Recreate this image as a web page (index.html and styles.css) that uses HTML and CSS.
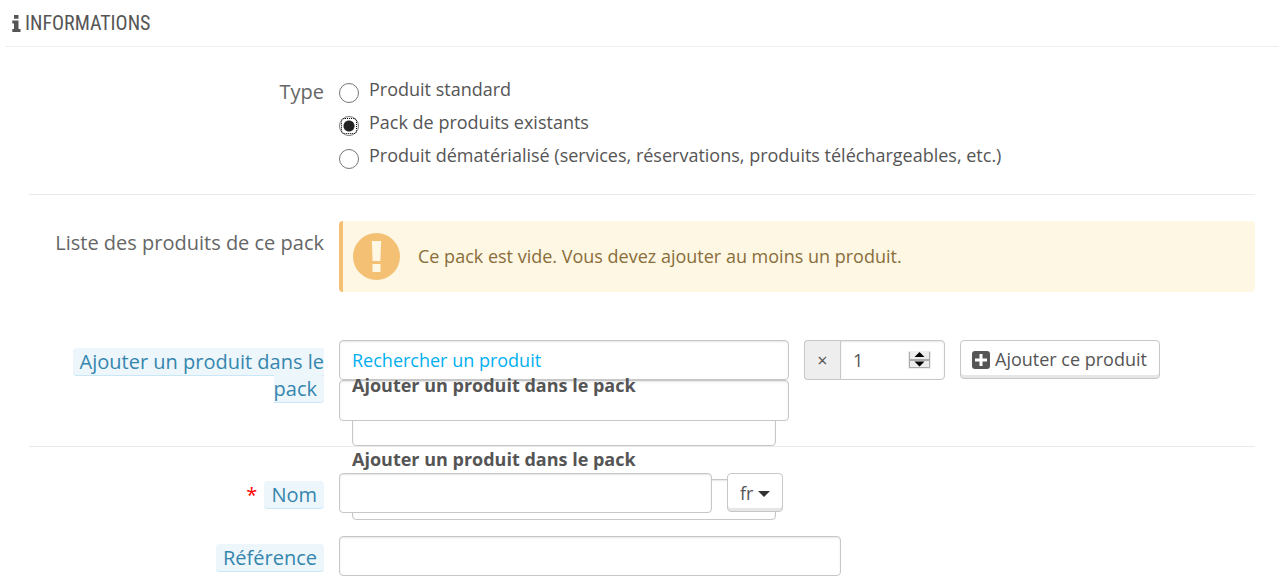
FILE: index.html
```html
<!DOCTYPE html>
<html lang="fr">
<head>
    <meta charset="UTF-8">
    <meta name="viewport" content="width=device-width, initial-scale=1.0">
    <title>Informations</title>
    <link rel="stylesheet" href="styles.css">
</head>
<body>
    <form class="panel">
        <h3 class="panel-heading">
            <svg class="icon-info" viewBox="0 0 9 17" aria-hidden="true">
                <path d="M2 0h4.500v3.800H2zM.3 5.600h6.200v8.400h2V17H.3v-3H2V8.600H.3z"/>
            </svg>
            INFORMATIONS
        </h3>
        <div class="panel-body">
            <div class="form-row">
                <div class="label-col" id="type-label">Type</div>
                <div class="radio-list" role="radiogroup" aria-labelledby="type-label">
                    <label class="radio"><input type="radio" name="type" value="standard"> Produit standard</label>
                    <label class="radio"><input type="radio" name="type" value="pack" checked> Pack de produits existants</label>
                    <label class="radio"><input type="radio" name="type" value="virtual"> Produit dématérialisé (services, réservations, produits téléchargeables, etc.)</label>
                </div>
            </div>
            <hr>
            <div class="form-row pack-list">
                <div class="label-col">Liste des produits de ce pack</div>
                <div class="alert">
                    <svg class="icon-alert" viewBox="0 0 47 47" aria-hidden="true">
                        <circle cx="23.5" cy="23.5" r="23.5" fill="#f4c074"/>
                        <path d="M18.8 8h9.4l-.8 20h-7.8zM19.5 31h8v8h-8z" fill="#fdf7e3"/>
                    </svg>
                    <span>Ce pack est vide. Vous devez ajouter au moins un produit.</span>
                </div>
            </div>
            <div class="form-row">
                <div class="label-col"><label class="tip" for="product-search">Ajouter un produit dans le pack</label></div>
                <div class="controls">
                    <div class="search">
                        <input class="field" id="product-search" type="text" placeholder="Rechercher un produit">
                        <input class="field field-over" type="text" aria-label="Produit">
                        <div class="drop">
                            <label for="drop-1">Ajouter un produit dans le pack</label>
                            <input class="field" id="drop-1" type="text">
                            <label for="drop-2">Ajouter un produit dans le pack</label>
                            <input class="field" id="drop-2" type="text">
                        </div>
                    </div>
                    <div class="quantity">
                        <label class="addon" for="quantity">×</label>
                        <input class="field" id="quantity" type="number" value="1" min="1">
                        <svg class="spinner" viewBox="0 0 23 18" aria-hidden="true">
                            <path d="M0 0h23v18H0z" fill="#ececec"/>
                            <path d="M1.500 1v15.500h20V1" fill="none" stroke="#aaa"/>
                            <path d="M1 9h21" fill="none" stroke="#aaa" stroke-width="2"/>
                            <path d="M11.500 1l5 5h-10zM11.500 15.500l5-5h-10z" fill="#000"/>
                        </svg>
                    </div>
                    <button class="btn" type="button">
                        <svg class="icon-plus" viewBox="0 0 18 18" aria-hidden="true">
                            <rect width="18" height="18" rx="3" fill="#555"/>
                            <path d="M9 3v12M3 9h12" stroke="#fff" stroke-width="3"/>
                        </svg>
                        Ajouter ce produit
                    </button>
                </div>
            </div>
            <hr>
            <div class="form-row">
                <div class="label-col"><span class="required">*</span> <label class="tip" for="name">Nom</label></div>
                <div class="controls">
                    <input class="field field-over name" id="name" type="text">
                    <div class="lang">
                        <select class="btn" aria-label="Langue">
                            <option>fr</option>
                        </select>
                        <svg class="caret" viewBox="0 0 12 6" aria-hidden="true"><path d="M0 0h12L6 6z" fill="#333"/></svg>
                    </div>
                </div>
            </div>
            <div class="form-row next">
                <div class="label-col"><label class="tip" for="reference">Référence</label></div>
                <div class="controls">
                    <input class="field reference" id="reference" type="text">
                </div>
            </div>
        </div>
    </form>
</body>
</html>
```
FILE: styles.css
```css
*{
    box-sizing: border-box;
}
body{
    margin: 0;
    background-color: #fff;
    color: #555;
    font-family: "Open Sans", sans-serif;
    font-size: 18px;
    line-height: 27px;
}
.panel{
    padding: 0 3px 12px 5px;
}
.panel-heading{
    display: flex;
    align-items: center;
    gap: 4px;
    height: 47px;
    margin: 0;
    padding: 0 7px;
    border-bottom: 1px solid #eee;
    font-family: "Ubuntu Condensed", "Roboto Condensed", "Open Sans Condensed", "Noto Sans Condensed", Lato, sans-serif;
    font-size: 20px;
    font-weight: 400;
}
.icon-info{
    width: 9px;
    height: 17px;
    fill: #555;
}
.panel-body{
    padding: 23px 24px 0;
}
.form-row{
    display: grid;
    grid-template-columns: minmax(0, 295fr) minmax(0, 916fr);
    gap: 15px;
}
.form-row.next{
    margin-top: 23px;
}
.pack-list{
    margin-bottom: 48px;
}
hr{
    height: 1px;
    margin: 25px 0 26px;
    border: 0;
    background-color: #eaeaea;
}
.label-col{
    padding-top: 8px;
    padding-left: 20px;
    color: #666;
    font-size: 20px;
    text-align: right;
}
.tip{
    padding: 0 7px;
    border-bottom: 1px solid #c9e7f6;
    border-radius: 4px;
    background-color: #edf6fb;
    color: #3586ae;
}
.required{
    margin-right: 2px;
    color: #f00;
}
.radio-list{
    display: flex;
    flex-direction: column;
    gap: 6px;
    padding-top: 6px;
}
.radio{
    display: flex;
    gap: 10px;
}
.radio input{
    flex: none;
    display: grid;
    width: 20px;
    height: 20px;
    margin: 7px 0 0;
    border: 1px solid #777;
    border-radius: 50%;
    background-color: #fff;
    appearance: none;
}
.radio input:checked{
    background: radial-gradient(circle, #222 0 5px, #fff 6px);
}
.radio input:checked::before{
    content: "";
    margin: 1px;
    border: 1px dotted #000;
    border-radius: 4px;
}
.alert{
    display: flex;
    align-items: center;
    gap: 18px;
    height: 71px;
    padding-left: 10px;
    border-left: 4px solid #f4c074;
    border-radius: 4px;
    background-color: #fdf7e3;
    color: #8a6d3b;
}
.icon-alert{
    width: 47px;
    height: 47px;
}
.controls{
    display: flex;
    align-items: flex-start;
    gap: 15px;
}
.field{
    display: block;
    width: 100%;
    height: 40px;
    padding: 0 12px;
    border: 1px solid #c7c7c7;
    border-radius: 4px;
    background-color: #fff;
    box-shadow: inset 0 1px 2px rgba(0, 0, 0, 0.1);
    color: #555;
    font: inherit;
}
.field::placeholder{
    color: #00aff0;
    opacity: 1;
}
.field-over{
    position: relative;
    z-index: 1;
}
.search{
    position: relative;
    flex: 0 1 450px;
}
.search .field-over{
    height: 41px;
}
/* second search list, hangs below the field */
.drop{
    position: absolute;
    top: 33px;
    left: 13px;
    right: 13px;
}
.drop label{
    position: relative;
    z-index: 2;
    display: block;
    font-weight: 700;
    line-height: 25px;
}
.drop .field{
    height: 41px;
    margin: 7px 0 1px;
}
.quantity{
    position: relative;
    display: flex;
    flex: 0 0 141px;
}
.addon{
    flex: 0 0 36px;
    border: 1px solid #c7c7c7;
    border-right: 0;
    border-radius: 4px 0 0 4px;
    background-color: #eee;
    line-height: 38px;
    text-align: center;
}
.quantity .field{
    min-width: 0;
    border-radius: 0 4px 4px 0;
    appearance: textfield;
}
.quantity .field::-webkit-inner-spin-button{
    -webkit-appearance: none;
}
.spinner{
    position: absolute;
    top: 11px;
    right: 14px;
    width: 23px;
    height: 18px;
    pointer-events: none;
}
.btn{
    display: flex;
    align-items: center;
    gap: 5px;
    height: 39px;
    padding: 0 12px 0 11px;
    border: 1px solid #c7c7c7;
    border-radius: 4px;
    background-color: #fff;
    box-shadow: inset 0 -3px 0 #e6e6e6;
    color: #555;
    font: inherit;
}
.icon-plus{
    width: 18px;
    height: 18px;
}
.name{
    flex: 0 1 373px;
}
.lang{
    position: relative;
    z-index: 1;
}
.lang .btn{
    width: 56px;
    padding: 1px 12px 0;
    appearance: none;
}
.caret{
    position: absolute;
    top: 18px;
    right: 13px;
    width: 12px;
    height: 6px;
    pointer-events: none;
}
.reference{
    flex: 0 1 502px;
}
```
